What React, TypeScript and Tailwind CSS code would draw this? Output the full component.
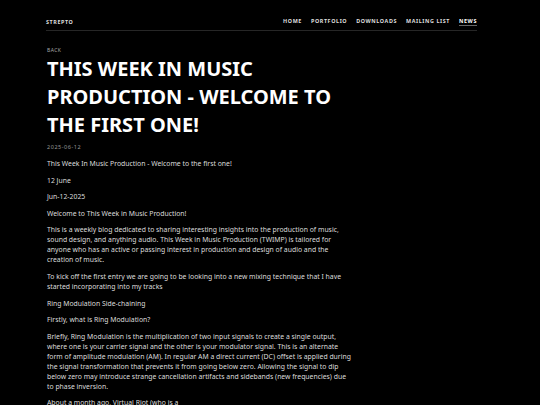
import React from "react";

const paragraphs = [
  "This Week In Music Production - Welcome to the first one!",
  "12 June",
  "Jun-12-2025",
  "Welcome to This Week in Music Production!",
  "This is a weekly blog dedicated to sharing interesting insights into the production of music, sound design, and anything audio. This Week in Music Production (TWIMP) is tailored for anyone who has an active or passing interest in production and design of audio and the creation of music.",
  "To kick off the first entry we are going to be looking into a new mixing technique that I have started incorporating into my tracks",
  "Ring Modulation Side-chaining",
  "Firstly, what is Ring Modulation?",
  "Briefly, Ring Modulation is the multiplication of two input signals to create a single output, where one is your carrier signal and the other is your modulator signal. This is an alternate form of amplitude modulation (AM). In regular AM a direct current (DC) offset is applied during the signal transformation that prevents it from going below zero. Allowing the signal to dip below zero may introduce strange cancellation artifacts and sidebands (new frequencies) due to phase inversion.",
  "About a month ago, Virtual Riot (who is a",
];

export default function App() {
  return (
    <div className="h-[405px] overflow-hidden bg-black text-[#dcdcdc] antialiased" style={{ fontFamily: '"Noto Sans", "Open Sans", sans-serif' }}>
      <div className="mx-[46px] w-[431px]">
        <header className="flex items-end justify-between border-b border-[#262626] pt-[17px] pb-[4px]">
          <span className="text-[5.4px] font-bold tracking-[0.11em] text-[#ddd] leading-[8px]">STREPTO</span>
          <nav className="flex gap-[9px] text-[5.4px] font-bold tracking-[0.11em] text-[#ddd] leading-[8px]">
            <span>HOME</span>
            <span>PORTFOLIO</span>
            <span>DOWNLOADS</span>
            <span>MAILING LIST</span>
            <span className="border-b border-[#666] text-white">NEWS</span>
          </nav>
        </header>
        <main className="pt-[16px] w-[306px] pl-px">
          <div className="text-[5px] tracking-[0.08em] text-[#aaa] leading-[6px]">BACK</div>
          <h1 className="mt-[2px] text-[20px] font-bold leading-[28px] text-white">
            THIS WEEK IN MUSIC PRODUCTION - WELCOME TO THE FIRST ONE!
          </h1>
          <div className="mt-[4px] text-[5.5px] tracking-[0.1em] text-[#999] leading-[8px]">2025-06-12</div>
          <div className="mt-[8px] flex flex-col gap-[6.6px] text-[6.85px] leading-[10px] text-[#dcdcdc]">
            {paragraphs.map((p, i) => (
              <p key={i}>{p}</p>
            ))}
          </div>
        </main>
      </div>
    </div>
  );
}
